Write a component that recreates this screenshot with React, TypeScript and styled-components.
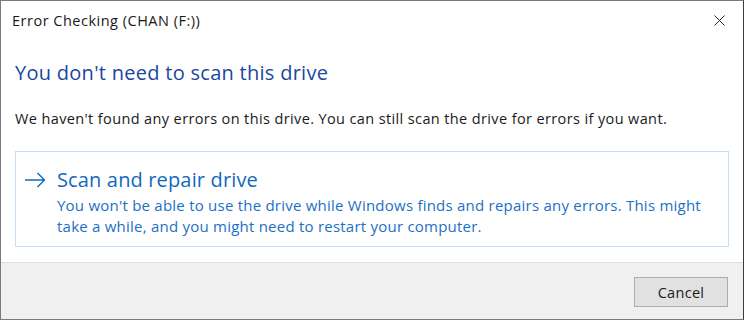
import React from "react";
import styled, { createGlobalStyle } from "styled-components";

const Global = createGlobalStyle`
  html, body { margin: 0; padding: 0; background: #ffffff; }
  body { font-family: "Open Sans", "Noto Sans", sans-serif; }
  * { box-sizing: border-box; }
`;

const Window = styled.div`
  width: 744px;
  height: 320px;
  border: 1px solid #7a7a7a;
  border-right-color: #3c3c3c;
  background: #ffffff;
  display: flex;
  flex-direction: column;
`;

const TitleBar = styled.div`
  height: 39px;
  display: flex;
  align-items: center;
  justify-content: space-between;
  padding: 0 18px 0 11px;
`;

const Title = styled.span`
  font-size: 14.5px;
  letter-spacing: 0.5px;
  color: #1a1a1a;
`;

const CloseButton = styled.div`
  width: 12px;
  height: 12px;
  display: flex;
  align-items: center;
  justify-content: center;
`;

const Content = styled.div`
  flex: 1;
  padding: 0 14px;
  display: flex;
  flex-direction: column;
`;

const Heading = styled.div`
  margin-top: 20px;
  line-height: 26px;
  font-size: 20px;
  letter-spacing: 0.28px;
  color: #1a47a0;
`;

const Message = styled.div`
  margin-top: 23px;
  line-height: 20px;
  font-size: 14.5px;
  letter-spacing: 0.38px;
  color: #1a1a1a;
  white-space: nowrap;
`;

const CommandLink = styled.div`
  margin-top: 22px;
  height: 96px;
  border: 1px solid #c6dff4;
  padding: 15px 10px 9px 8px;
  display: flex;
  gap: 11px;
`;

const ArrowBox = styled.div`
  width: 22px;
  height: 26px;
  display: flex;
  align-items: center;
`;

const LinkBody = styled.div`
  display: flex;
  flex-direction: column;
  gap: 2px;
`;

const LinkTitle = styled.div`
  line-height: 26px;
  font-size: 20px;
  letter-spacing: 0.15px;
  color: #1268c0;
`;

const LinkText = styled.div`
  line-height: 21px;
  font-size: 15px;
  letter-spacing: 0.23px;
  color: #1c70c6;
  white-space: nowrap;
`;

const Footer = styled.div`
  height: 57px;
  background: #f0f0f0;
  border-top: 1px solid #dfdfdf;
  display: flex;
  justify-content: flex-end;
  align-items: flex-start;
  padding: 14px 15px 0 0;
`;

const Button = styled.button`
  width: 94px;
  height: 30px;
  background: #e1e1e1;
  border: 1px solid #adadad;
  font-family: "Open Sans", "Noto Sans", sans-serif;
  font-size: 14.5px;
  letter-spacing: 0.3px;
  color: #1a1a1a;
  padding: 0;
`;

export default function App() {
  return (
    <>
      <Global />
      <Window>
        <TitleBar>
          <Title>Error Checking (CHAN (F:))</Title>
          <CloseButton>
            <svg width="11" height="11" viewBox="0 0 11 11">
              <path d="M0.5 0.5 L10.5 10.5 M10.5 0.5 L0.5 10.5" stroke="#222" strokeWidth="1" fill="none" />
            </svg>
          </CloseButton>
        </TitleBar>
        <Content>
          <Heading>You don't need to scan this drive</Heading>
          <Message>
            We haven't found any errors on this drive. You can still scan the drive for errors if you want.
          </Message>
          <CommandLink>
            <ArrowBox>
              <svg width="22" height="16" viewBox="0 0 22 16">
                <path d="M1 8 H20.5 M13.5 1 L20.5 8 L13.5 15" stroke="#1268c0" strokeWidth="1.4" fill="none" />
              </svg>
            </ArrowBox>
            <LinkBody>
              <LinkTitle>Scan and repair drive</LinkTitle>
              <LinkText>
                You won't be able to use the drive while Windows finds and repairs any errors. This might
                <br />
                take a while, and you might need to restart your computer.
              </LinkText>
            </LinkBody>
          </CommandLink>
        </Content>
        <Footer>
          <Button>Cancel</Button>
        </Footer>
      </Window>
    </>
  );
}
